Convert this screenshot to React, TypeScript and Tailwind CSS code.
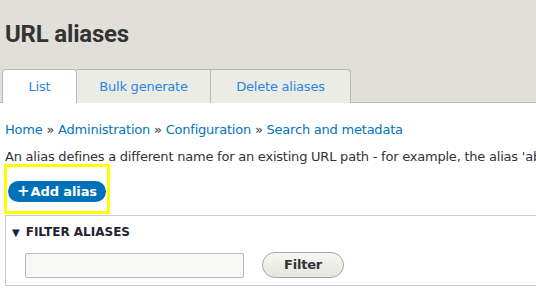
import React from 'react';

const tabs = [
  { label: 'List', width: 'w-[75px]', active: true },
  { label: 'Bulk generate', width: 'w-[134px]', active: false },
  { label: 'Delete aliases', width: 'w-[140px]', active: false },
];

const crumbs = ['Home', 'Administration', 'Configuration', 'Search and metadata'];

export default function App() {
  return (
    <div className="w-[536px] h-[298px] overflow-hidden bg-white font-['DejaVu_Sans',sans-serif] text-[13px] tracking-[-0.22px] text-[#333]">
      {/* Page header with tabs */}
      <div className="bg-[#e0e0d8] border-b border-[#b9b9b4] h-[103px] flex flex-col">
        <h1 className="pl-[5px] pt-[20px] text-[24px] leading-[28px] font-bold font-['Roboto',sans-serif] text-[#333] tracking-[-0.2px]">
          URL aliases
        </h1>
        <div className="mt-auto ml-[2px] flex">
          {tabs.map((tab, idx) => (
            <div
              key={tab.label}
              className={`${tab.width} h-[34px] -mb-px flex items-center justify-center border-t border-r border-[#b9b9b4] text-[#2b86e0] ${
                idx === 0 ? 'border-l rounded-tl-[4px]' : ''
              } ${idx === tabs.length - 1 ? 'rounded-tr-[4px]' : ''} ${
                tab.active ? 'bg-white rounded-tr-[4px]' : 'bg-[#ecece7]'
              }`}
            >
              {tab.label}
            </div>
          ))}
        </div>
      </div>

      {/* Breadcrumb */}
      <div className="pl-[5px] mt-[19px] leading-[16px] whitespace-nowrap text-[#0074bd]">
        {crumbs.map((c, i) => (
          <span key={c}>
            {c}
            {i < crumbs.length - 1 && <span className="text-[#333]"> » </span>}
          </span>
        ))}
      </div>

      <p className="pl-[5px] mt-[11px] leading-[16px] whitespace-nowrap">
        An alias defines a different name for an existing URL path - for example, the alias 'about' for the URL 'node/1'.
      </p>

      {/* Highlighted action */}
      <div className="ml-[4px] -mt-[1px] inline-block align-top border-[3px] border-[#ffff00] px-[1px] pt-[14px] pb-[9px]">
        <div className="w-[98px] h-[21px] rounded-full bg-[#0071b8] text-white font-bold text-[13px] tracking-[-0.1px] flex items-center justify-center">
          <span className="text-[15px] mr-[1px]">+</span>Add alias
        </div>
      </div>

      {/* Filter fieldset */}
      <div className="ml-[5px] mt-[1px] w-[560px] h-[71px] border border-[#cccccc] pt-[9px]">
        <div className="flex items-center pl-[6px] h-[14px] font-bold text-[12px] text-[#222330] uppercase tracking-[0px]">
          <span className="text-[10px] mr-[6px]">▼</span>
          Filter aliases
        </div>
        <div className="flex items-center mt-[13px] pl-[19px]">
          <div className="w-[219px] h-[25px] border border-[#b8b8b8] rounded-[2px] bg-[#f8f8f6]" />
          <div className="ml-[18px] w-[82px] h-[26px] rounded-full border border-[#a6a6a6] bg-gradient-to-b from-[#f6f6f3] to-[#e6e6df] flex items-center justify-center font-bold text-[#333]">
            Filter
          </div>
        </div>
      </div>
    </div>
  );
}
